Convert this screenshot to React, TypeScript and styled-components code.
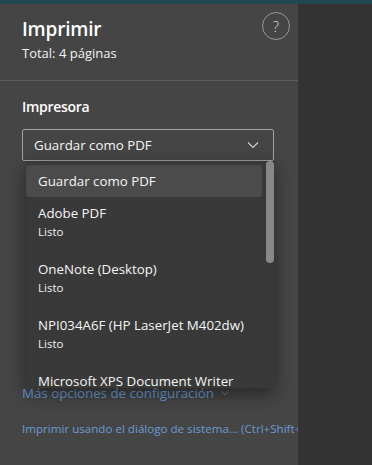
import styled, { createGlobalStyle } from 'styled-components';

const GlobalStyle = createGlobalStyle`
  html, body {
    margin: 0;
    padding: 0;
    background: #333333;
  }
  body {
    font-family: "Segoe UI", "Open Sans", sans-serif;
    color: #ffffff;
  }
`;

const Window = styled.div`
  width: 372px;
  height: 465px;
  display: flex;
  flex-direction: column;
  overflow: hidden;
`;

const AccentBar = styled.div`
  height: 4px;
  background: #234852;
  flex-shrink: 0;
`;

const Body = styled.div`
  flex: 1;
  display: flex;
  min-height: 0;
`;

const Panel = styled.aside`
  width: 298px;
  flex-shrink: 0;
  background: #454545;
  display: flex;
  flex-direction: column;
  overflow: hidden;
`;

const Preview = styled.main`
  flex: 1;
  background: #333333;
`;

const Header = styled.header`
  display: flex;
  justify-content: space-between;
  align-items: flex-start;
  padding: 11px 8px 17px 22px;
  border-bottom: 1px solid #5e5e5e;
`;

const TitleBlock = styled.div`
  display: flex;
  flex-direction: column;
`;

const Title = styled.h1`
  margin: 0;
  font-size: 19px;
  line-height: 28px;
  font-weight: 600;
  letter-spacing: -0.2px;
  color: #ffffff;
`;

const Subtitle = styled.div`
  font-size: 13px;
  line-height: 20px;
  color: #f2f2f2;
`;

const HelpButton = styled.button`
  width: 28px;
  height: 28px;
  margin-top: -3px;
  border-radius: 50%;
  border: 1px solid #9a9a9a;
  background: transparent;
  color: #dddddd;
  font-family: inherit;
  font-size: 15px;
  font-weight: 300;
  line-height: 1;
  padding: 0;
  display: flex;
  align-items: center;
  justify-content: center;
`;

const Content = styled.div`
  display: flex;
  flex-direction: column;
  padding: 16px 0 0 22px;
`;

const SectionLabel = styled.div`
  font-size: 14px;
  line-height: 20px;
  font-weight: 600;
  letter-spacing: -0.3px;
  color: #ffffff;
  margin-bottom: 12px;
`;

const SelectWrap = styled.div`
  position: relative;
  width: 252px;
`;

const SelectBox = styled.div`
  height: 32px;
  box-sizing: border-box;
  border: 1px solid #a0a0a0;
  border-radius: 2px;
  display: flex;
  align-items: center;
  justify-content: space-between;
  padding: 0 14px 0 11px;
  font-size: 13.3px;
  color: #f5f5f5;
`;

const Dropdown = styled.div`
  position: absolute;
  top: 32px;
  left: 4px;
  width: 248px;
  height: 227px;
  background: #393939;
  border-radius: 0 0 4px 4px;
  box-shadow: 0 6px 18px rgba(0, 0, 0, 0.45);
  display: flex;
  overflow: hidden;
  z-index: 2;
`;

const OptionList = styled.ul`
  list-style: none;
  margin: 0;
  padding: 4px 0 0 0;
  flex: 1;
`;

const Option = styled.li<{ $active?: boolean }>`
  padding: 6px 12px ${(p) => (p.$active ? '6px' : '12px')};
  border-radius: 4px;
  background: ${(p) => (p.$active ? '#4b4b4b' : 'transparent')};
`;

const OptionName = styled.div`
  font-size: 13.3px;
  line-height: 20px;
  color: #f5f5f5;
  white-space: nowrap;
`;

const OptionStatus = styled.div`
  font-size: 11.5px;
  line-height: 18px;
  color: #f0f0f0;
`;

const ScrollTrack = styled.div`
  width: 12px;
  flex-shrink: 0;
  padding-left: 4px;
  box-sizing: border-box;
`;

const ScrollThumb = styled.div`
  width: 8px;
  height: 102px;
  border-radius: 4px;
  background: #888888;
`;

const MoreLink = styled.a`
  margin-top: 222px;
  display: flex;
  align-items: center;
  gap: 7px;
  font-size: 13.3px;
  line-height: 20px;
  color: #6a9bd3;
  white-space: nowrap;
`;

const SystemLink = styled.a`
  margin-top: 18px;
  font-size: 11.6px;
  line-height: 16px;
  color: #6a9bd3;
  white-space: nowrap;
`;

const Chevron = ({ size, color }: { size: number; color: string }) => (
  <svg width={size} height={size / 2} viewBox="0 0 12 6" fill="none">
    <path d="M1 0.5 L6 5.5 L11 0.5" stroke={color} strokeWidth="1.1" />
  </svg>
);

const printers = [
  { name: 'Adobe PDF', status: 'Listo' },
  { name: 'OneNote (Desktop)', status: 'Listo' },
  { name: 'NPI034A6F (HP LaserJet M402dw)', status: 'Listo' },
  { name: 'Microsoft XPS Document Writer', status: 'Listo' },
];

export default function App() {
  return (
    <>
      <GlobalStyle />
      <Window>
        <AccentBar />
        <Body>
          <Panel>
            <Header>
              <TitleBlock>
                <Title>Imprimir</Title>
                <Subtitle>Total: 4 páginas</Subtitle>
              </TitleBlock>
              <HelpButton aria-label="Ayuda">?</HelpButton>
            </Header>
            <Content>
              <SectionLabel>Impresora</SectionLabel>
              <SelectWrap>
                <SelectBox>
                  Guardar como PDF
                  <Chevron size={12} color="#d0d0d0" />
                </SelectBox>
                <Dropdown>
                  <OptionList>
                    <Option $active>
                      <OptionName>Guardar como PDF</OptionName>
                    </Option>
                    {printers.map((p) => (
                      <Option key={p.name}>
                        <OptionName>{p.name}</OptionName>
                        <OptionStatus>{p.status}</OptionStatus>
                      </Option>
                    ))}
                  </OptionList>
                  <ScrollTrack>
                    <ScrollThumb />
                  </ScrollTrack>
                </Dropdown>
              </SelectWrap>
              <MoreLink>
                Más opciones de configuración
                <Chevron size={8} color="#6a9bd3" />
              </MoreLink>
              <SystemLink>Imprimir usando el diálogo de sistema... (Ctrl+Shift+P)</SystemLink>
            </Content>
          </Panel>
          <Preview />
        </Body>
      </Window>
    </>
  );
}
